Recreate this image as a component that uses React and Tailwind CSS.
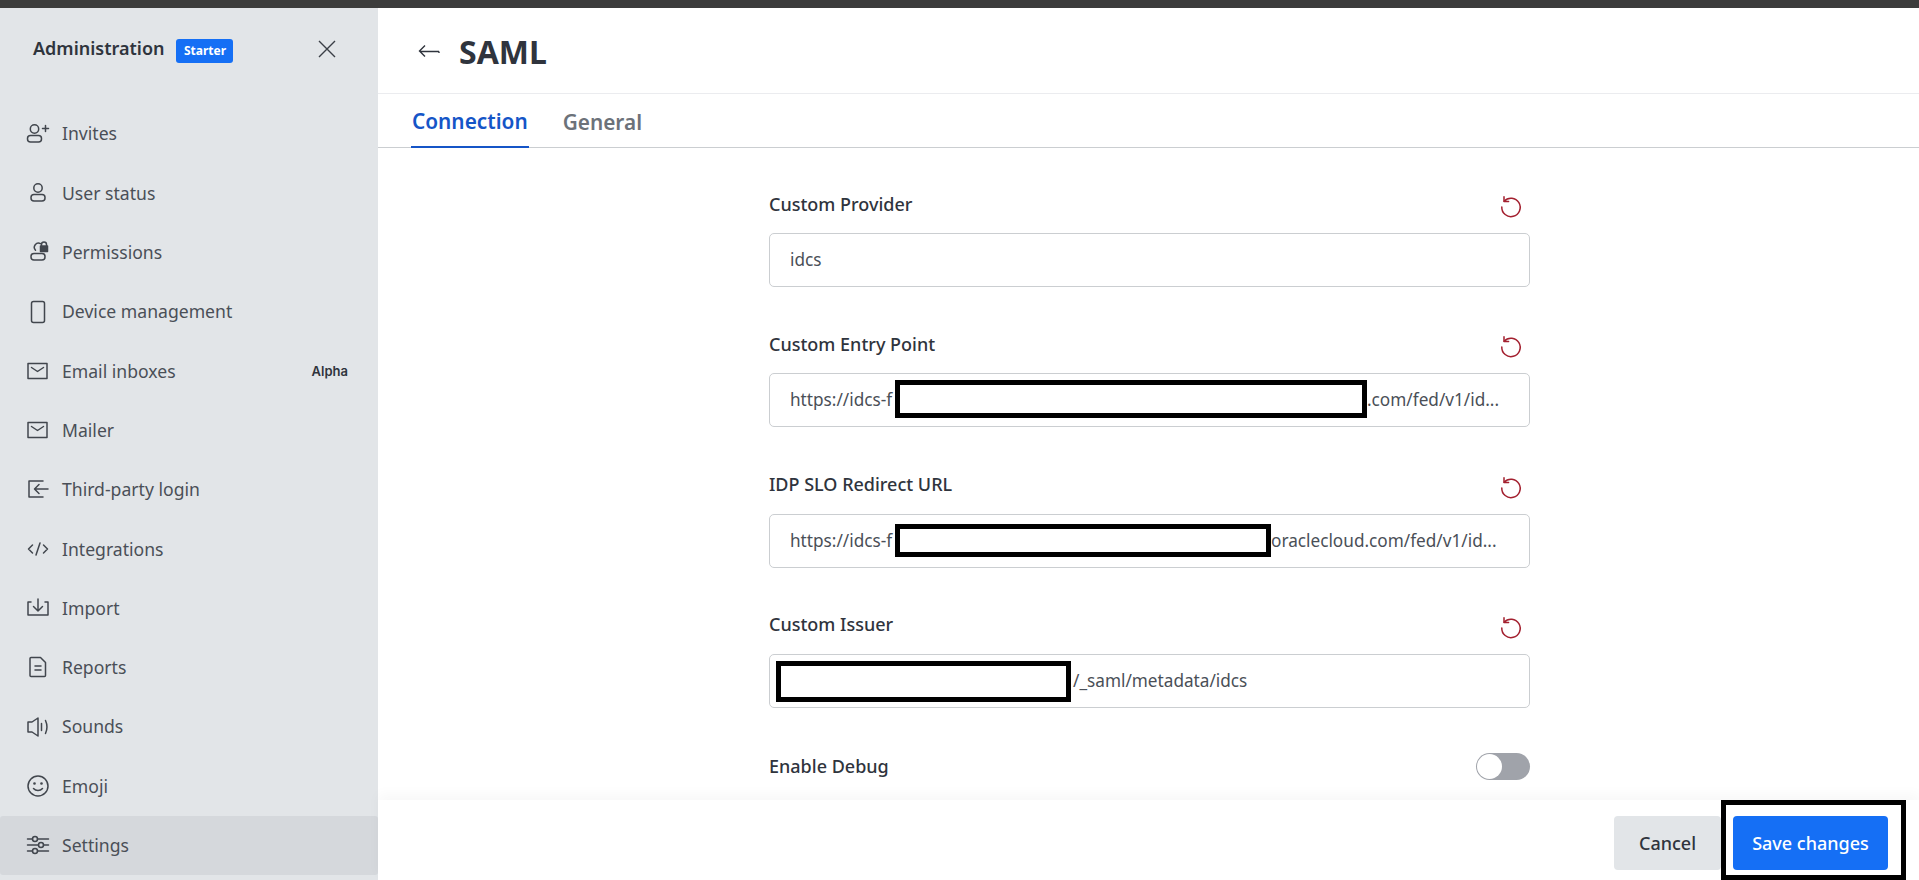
function Glyph({ children }) {
  return (
    <svg width="24" height="24" viewBox="0 0 24 24" fill="none" stroke="currentColor" strokeWidth="1.5" strokeLinecap="round" strokeLinejoin="round" className="shrink-0 text-[#41464d]">
      {children}
    </svg>
  );
}

const ICONS = {
  invite: (
    <>
      <circle cx="8.5" cy="7" r="4.2" />
      <rect x="1.5" y="13.5" width="14" height="6.5" rx="3" />
      <path d="M19.5 3.5v6M16.5 6.5h6" />
    </>
  ),
  user: (
    <>
      <circle cx="12" cy="7" r="4.2" />
      <rect x="5" y="13.5" width="14" height="6.5" rx="3" />
    </>
  ),
  lock: (
    <>
      <path d="M14.5 3.6a4.2 4.2 0 0 0-5 6.6" />
      <rect x="5" y="13.5" width="14" height="6.5" rx="3" />
      <path d="M15.5 5.5v-1a2.5 2.5 0 0 1 5 0v1" />
      <rect x="14.5" y="6" width="7" height="5.5" fill="currentColor" />
    </>
  ),
  phone: <rect x="5.5" y="1.5" width="13" height="21" rx="2" />,
  mail: (
    <>
      <rect x="2" y="4.5" width="19" height="15" />
      <path d="M5.5 8.5l6 4 6-4" />
    </>
  ),
  login: (
    <>
      <path d="M17 4H3v16h14" />
      <path d="M22 12H9M13 7.5L8.5 12l4.5 4.5" />
    </>
  ),
  code: <path d="M6.5 8L2.5 12l4 4M17.5 8l4 4-4 4M14 6l-4 12" />,
  import: (
    <>
      <path d="M5 6H2v13h20V6h-3" />
      <path d="M12 3v12M7.5 10.5L12 15l4.5-4.5" />
    </>
  ),
  report: (
    <>
      <path d="M5 2.5h9.5l5 5V20.5a1 1 0 0 1-1 1H5a1 1 0 0 1-1-1V3.5a1 1 0 0 1 1-1z" />
      <path d="M9 11h6M9 15h6" />
    </>
  ),
  sound: (
    <>
      <path d="M6 7H2v10h4l6 4V3z" />
      <path d="M15.5 8.5v7M19.5 5.5c1.8 4 1.8 9 0 13" />
    </>
  ),
  emoji: (
    <>
      <circle cx="12" cy="12" r="10" />
      <path d="M7.5 14.5c2.3 2.6 6.7 2.6 9 0" />
      <circle cx="8.5" cy="9.5" r="0.6" fill="currentColor" />
      <circle cx="15.5" cy="9.5" r="0.6" fill="currentColor" />
    </>
  ),
  settings: (
    <>
      <path d="M1.5 6h5M11.5 6h11M1.5 12h11M17.5 12h5M1.5 18h5M11.5 18h11" />
      <circle cx="9" cy="6" r="2.5" />
      <circle cx="15" cy="12" r="2.5" />
      <circle cx="9" cy="18" r="2.5" />
    </>
  ),
};

const NAV = [
  { icon: 'invite', label: 'Invites' },
  { icon: 'user', label: 'User status' },
  { icon: 'lock', label: 'Permissions' },
  { icon: 'phone', label: 'Device management' },
  { icon: 'mail', label: 'Email inboxes', tag: 'Alpha' },
  { icon: 'mail', label: 'Mailer' },
  { icon: 'login', label: 'Third-party login' },
  { icon: 'code', label: 'Integrations' },
  { icon: 'import', label: 'Import' },
  { icon: 'report', label: 'Reports' },
  { icon: 'sound', label: 'Sounds' },
  { icon: 'emoji', label: 'Emoji' },
  { icon: 'settings', label: 'Settings', active: true },
];

function ResetIcon() {
  return (
    <svg width="24" height="24" viewBox="0 0 24 24" fill="none" stroke="#a3202f" strokeWidth="1.5" strokeLinecap="round" strokeLinejoin="round" className="mt-[6px]">
      <path d="M5.2 6.2A9.2 9.2 0 1 1 2.8 12" />
      <path d="M5 1.8v4.6h4.6" />
    </svg>
  );
}

function Redacted({ className }) {
  return <span className={`shrink-0 bg-white border-[5px] border-black ${className}`} />;
}

function Prefix() {
  return <span className="w-[125px] shrink-0 overflow-hidden pl-[20px]">https://idcs-f</span>;
}

function Field({ label, children }) {
  return (
    <div className="h-[140.3px] pt-[3px]">
      <div className="flex items-center justify-between h-[28px] pr-[7px] mb-[15px]">
        <span className="text-[18px] text-[#2f343d] font-medium">{label}</span>
        <ResetIcon />
      </div>
      <div className="h-[54px] flex items-center border border-[#cbced1] rounded-[5px] overflow-hidden text-[17.2px] text-[#4a4f57] whitespace-nowrap">
        {children}
      </div>
    </div>
  );
}

export default function App() {
  return (
    <div className="h-[880px] w-full overflow-hidden flex flex-col bg-white font-['Noto_Sans',sans-serif]">
      <div className="h-[8px] shrink-0 bg-[#3c3c3c]" />
      <div className="flex flex-1 min-h-0">
        {/* Sidebar */}
        <aside className="w-[378px] shrink-0 bg-[#e2e5e8]">
          <div className="h-[81px] flex items-center pl-[33px] pr-[42px]">
            <span className="text-[18px] font-semibold text-[#2f343d]">Administration</span>
            <span className="ml-[12px] mt-[4px] h-[24px] w-[57px] flex items-center justify-center rounded-[3px] bg-[#156ff5] text-white text-[12px] font-bold">Starter</span>
            <svg className="ml-auto" width="18" height="18" viewBox="0 0 18 18" fill="none" stroke="#3a3f46" strokeWidth="1.4">
              <path d="M1 1l16 16M17 1L1 17" />
            </svg>
          </div>
          <nav className="pt-[15px]">
            {NAV.map((item) => (
              <div
                key={item.label}
                className={`h-[59.3px] flex items-center gap-[12px] pl-[26px] pr-[30px] rounded-[3px] ${item.active ? 'bg-[#d5d8dc]' : ''}`}
              >
                <Glyph>{ICONS[item.icon]}</Glyph>
                <span className="text-[17.6px] text-[#4a4f57]">{item.label}</span>
                {item.tag && <span className="ml-auto mt-[2px] font-['Inter',sans-serif] text-[13px] font-semibold text-[#2f343d]">{item.tag}</span>}
              </div>
            ))}
          </nav>
        </aside>

        {/* Main */}
        <main className="flex-1 min-w-0 flex flex-col">
          <header className="h-[86px] shrink-0 flex items-center gap-[19px] pl-[40px] border-b border-[#ebecef]">
            <svg width="22" height="14" viewBox="0 0 22 14" fill="none" stroke="#2f343d" strokeWidth="1.4">
              <path d="M21 7.5H2M7 1.5L1.5 7 7 12.5M21 7.5v1.5" />
            </svg>
            <h1 className="mt-[2px] text-[32px] font-bold text-[#2f343d]">SAML</h1>
          </header>
          <div className="h-[54px] shrink-0 flex gap-[34px] pl-[33px] border-b border-[#cbced1]">
            <div className="h-[54px] pt-[4px] px-[1px] flex items-center border-b-2 border-[#1555c7] text-[20.8px] font-semibold text-[#1555c7]">Connection</div>
            <div className="h-[53px] pt-[4px] flex items-center text-[20.8px] font-semibold text-[#6c727a]">General</div>
          </div>
          <div className="flex-1 min-h-0 overflow-hidden pt-[39px]">
            <div className="w-[761px] ml-[391px]">
              <Field label="Custom Provider">
                <span className="pl-[20px]">idcs</span>
              </Field>
              <Field label="Custom Entry Point">
                <Prefix />
                <Redacted className="w-[472px] h-[38px] -mt-[2px]" />
                <span>.com/fed/v1/id...</span>
              </Field>
              <Field label="IDP SLO Redirect URL">
                <Prefix />
                <Redacted className="w-[376px] h-[33px]" />
                <span>oraclecloud.com/fed/v1/id...</span>
              </Field>
              <Field label="Custom Issuer">
                <Redacted className="ml-[6px] w-[295px] h-[41px] mt-[2px]" />
                <span className="pl-[2px]">/_saml/metadata/idcs</span>
              </Field>
              <div className="flex items-center justify-between mt-[5px]">
                <span className="text-[18px] font-medium text-[#2f343d]">Enable Debug</span>
                <div className="w-[54px] h-[27px] rounded-full bg-[#a0a3aa] p-[1px]">
                  <div className="w-[25px] h-[25px] rounded-full bg-white" />
                </div>
              </div>
            </div>
          </div>
          <footer className="relative h-[80px] shrink-0 flex items-start justify-end gap-[12px] pt-[16px] pr-[31px] shadow-[0_-6px_12px_rgba(0,0,0,0.03)]">
            <button className="h-[54px] w-[107px] rounded-[4px] bg-[#e2e5e8] text-[18px] font-medium text-[#2f343d]">Cancel</button>
            <button className="h-[54px] w-[155px] rounded-[4px] bg-[#156ff5] text-[18px] font-medium text-white">Save changes</button>
            <div className="absolute right-[13px] top-0 w-[185px] h-[80px] border-[5px] border-black" />
          </footer>
        </main>
      </div>
    </div>
  );
}
